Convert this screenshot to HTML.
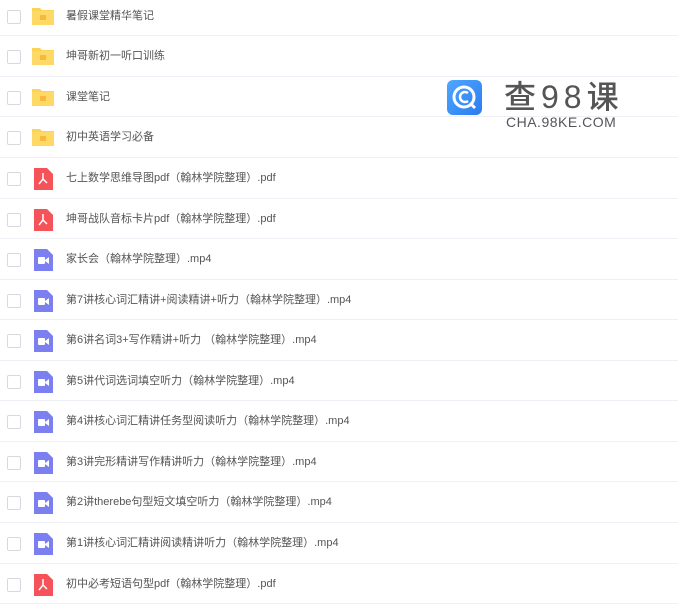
<!DOCTYPE html>
<html><head><meta charset="utf-8"><style>
body{margin:0;width:678px;height:600px;overflow:hidden;background:#fff;font-family:"Liberation Sans","Noto Sans CJK SC",sans-serif;position:relative}
.list{position:absolute;left:0;top:-4.3px;width:678px}
.r{height:40.57px;box-sizing:border-box;border-bottom:1px solid #eef0f5;position:relative}
.cb{position:absolute;left:7px;top:14px;width:12px;height:12px;border:1px solid #d6d9e0;border-radius:2px;background:#fff}
.ic{position:absolute;left:31px;top:9px}
.t{position:absolute;left:66px;top:12px;font-size:11px;color:#555;white-space:nowrap;line-height:16px}
.logo{position:absolute;left:447px;top:80px;width:35px;height:35px;border-radius:6px;background:linear-gradient(135deg,#4fa7ff,#2b7cf0)}
.bt{position:absolute;left:504px;top:72px;font-size:32px;color:#555;letter-spacing:5px;font-weight:500;font-family:"Liberation Sans","Noto Sans CJK SC",sans-serif}
.st{position:absolute;left:506px;top:114px;font-size:14px;color:#555;letter-spacing:0.5px}
</style></head><body>
<div class="list">
<div class="r"><div class="cb"></div><svg class="ic" width="24" height="22"><path d="M1 3h8l2 2h12v15H1z" fill="#fcd354"/><rect x="1" y="6" width="22" height="14" rx="1" fill="#ffd966"/><rect x="9" y="10" width="6" height="5" fill="#f6b93b"/></svg><div class="t">暑假课堂精华笔记</div></div>
<div class="r"><div class="cb"></div><svg class="ic" width="24" height="22"><path d="M1 3h8l2 2h12v15H1z" fill="#fcd354"/><rect x="1" y="6" width="22" height="14" rx="1" fill="#ffd966"/><rect x="9" y="10" width="6" height="5" fill="#f6b93b"/></svg><div class="t">坤哥新初一听口训练</div></div>
<div class="r"><div class="cb"></div><svg class="ic" width="24" height="22"><path d="M1 3h8l2 2h12v15H1z" fill="#fcd354"/><rect x="1" y="6" width="22" height="14" rx="1" fill="#ffd966"/><rect x="9" y="10" width="6" height="5" fill="#f6b93b"/></svg><div class="t">课堂笔记</div></div>
<div class="r"><div class="cb"></div><svg class="ic" width="24" height="22"><path d="M1 3h8l2 2h12v15H1z" fill="#fcd354"/><rect x="1" y="6" width="22" height="14" rx="1" fill="#ffd966"/><rect x="9" y="10" width="6" height="5" fill="#f6b93b"/></svg><div class="t">初中英语学习必备</div></div>
<div class="r"><div class="cb"></div><svg class="ic" width="24" height="24"><path d="M3 1h13l6 6v16H3z" fill="#f5525a"/><path d="M12 6v6l-4 5M12 12l4 4" stroke="#fff" stroke-width="1.5" fill="none"/></svg><div class="t">七上数学思维导图pdf（翰林学院整理）.pdf</div></div>
<div class="r"><div class="cb"></div><svg class="ic" width="24" height="24"><path d="M3 1h13l6 6v16H3z" fill="#f5525a"/><path d="M12 6v6l-4 5M12 12l4 4" stroke="#fff" stroke-width="1.5" fill="none"/></svg><div class="t">坤哥战队音标卡片pdf（翰林学院整理）.pdf</div></div>
<div class="r"><div class="cb"></div><svg class="ic" width="24" height="24"><path d="M3 1h13l6 6v16H3z" fill="#7b7ff0"/><rect x="7" y="9" width="7" height="7" rx="1" fill="#fff"/><path d="M14 12l4-3v7l-4-3z" fill="#fff"/></svg><div class="t">家长会（翰林学院整理）.mp4</div></div>
<div class="r"><div class="cb"></div><svg class="ic" width="24" height="24"><path d="M3 1h13l6 6v16H3z" fill="#7b7ff0"/><rect x="7" y="9" width="7" height="7" rx="1" fill="#fff"/><path d="M14 12l4-3v7l-4-3z" fill="#fff"/></svg><div class="t">第7讲核心词汇精讲+阅读精讲+听力（翰林学院整理）.mp4</div></div>
<div class="r"><div class="cb"></div><svg class="ic" width="24" height="24"><path d="M3 1h13l6 6v16H3z" fill="#7b7ff0"/><rect x="7" y="9" width="7" height="7" rx="1" fill="#fff"/><path d="M14 12l4-3v7l-4-3z" fill="#fff"/></svg><div class="t">第6讲名词3+写作精讲+听力 （翰林学院整理）.mp4</div></div>
<div class="r"><div class="cb"></div><svg class="ic" width="24" height="24"><path d="M3 1h13l6 6v16H3z" fill="#7b7ff0"/><rect x="7" y="9" width="7" height="7" rx="1" fill="#fff"/><path d="M14 12l4-3v7l-4-3z" fill="#fff"/></svg><div class="t">第5讲代词选词填空听力（翰林学院整理）.mp4</div></div>
<div class="r"><div class="cb"></div><svg class="ic" width="24" height="24"><path d="M3 1h13l6 6v16H3z" fill="#7b7ff0"/><rect x="7" y="9" width="7" height="7" rx="1" fill="#fff"/><path d="M14 12l4-3v7l-4-3z" fill="#fff"/></svg><div class="t">第4讲核心词汇精讲任务型阅读听力（翰林学院整理）.mp4</div></div>
<div class="r"><div class="cb"></div><svg class="ic" width="24" height="24"><path d="M3 1h13l6 6v16H3z" fill="#7b7ff0"/><rect x="7" y="9" width="7" height="7" rx="1" fill="#fff"/><path d="M14 12l4-3v7l-4-3z" fill="#fff"/></svg><div class="t">第3讲完形精讲写作精讲听力（翰林学院整理）.mp4</div></div>
<div class="r"><div class="cb"></div><svg class="ic" width="24" height="24"><path d="M3 1h13l6 6v16H3z" fill="#7b7ff0"/><rect x="7" y="9" width="7" height="7" rx="1" fill="#fff"/><path d="M14 12l4-3v7l-4-3z" fill="#fff"/></svg><div class="t">第2讲therebe句型短文填空听力（翰林学院整理）.mp4</div></div>
<div class="r"><div class="cb"></div><svg class="ic" width="24" height="24"><path d="M3 1h13l6 6v16H3z" fill="#7b7ff0"/><rect x="7" y="9" width="7" height="7" rx="1" fill="#fff"/><path d="M14 12l4-3v7l-4-3z" fill="#fff"/></svg><div class="t">第1讲核心词汇精讲阅读精讲听力（翰林学院整理）.mp4</div></div>
<div class="r"><div class="cb"></div><svg class="ic" width="24" height="24"><path d="M3 1h13l6 6v16H3z" fill="#f5525a"/><path d="M12 6v6l-4 5M12 12l4 4" stroke="#fff" stroke-width="1.5" fill="none"/></svg><div class="t">初中必考短语句型pdf（翰林学院整理）.pdf</div></div>
</div>
<div class="logo"><svg width="35" height="35"><circle cx="17" cy="17" r="10" stroke="#fff" stroke-width="3" fill="none"/><path d="M21 13a5 5 0 1 0 0 8" stroke="#fff" stroke-width="2.5" fill="none"/><path d="M24 24l4 4" stroke="#fff" stroke-width="3"/></svg></div>
<div class="bt">查98课</div>
<div class="st">CHA.98KE.COM</div>
</body></html>
